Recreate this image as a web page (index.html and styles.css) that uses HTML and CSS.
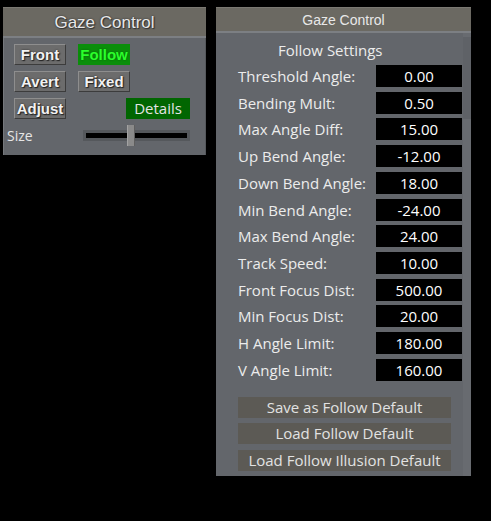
FILE: index.html
```html
<!DOCTYPE html>
<html>
<head>
<meta charset="utf-8">
<link rel="stylesheet" href="styles.css">
</head>
<body>
<div class="desk">
  <div class="panel small">
    <div class="title big">Gaze Control</div>
    <div class="body">
      <div class="brow">
        <span class="btn">Front</span>
        <span class="btn on">Follow</span>
      </div>
      <div class="brow">
        <span class="btn">Avert</span>
        <span class="btn">Fixed</span>
      </div>
      <div class="brow last">
        <span class="btn">Adjust</span>
        <span class="details">Details</span>
      </div>
      <div class="sizerow">
        <span class="sizelabel">Size</span>
        <div class="slider"><div class="track"></div><div class="thumb"></div></div>
      </div>
    </div>
  </div>
  <div class="panel wide">
    <div class="title">Gaze Control</div>
    <div class="body2">
      <div class="scroll"><div class="sthumb"></div></div>
      <div class="heading">Follow Settings</div>
      <div class="rows">
        <div class="row"><span class="lbl">Threshold Angle:</span><span class="val">0.00</span></div>
        <div class="row"><span class="lbl">Bending Mult:</span><span class="val">0.50</span></div>
        <div class="row"><span class="lbl">Max Angle Diff:</span><span class="val">15.00</span></div>
        <div class="row"><span class="lbl">Up Bend Angle:</span><span class="val">-12.00</span></div>
        <div class="row"><span class="lbl">Down Bend Angle:</span><span class="val">18.00</span></div>
        <div class="row"><span class="lbl">Min Bend Angle:</span><span class="val">-24.00</span></div>
        <div class="row"><span class="lbl">Max Bend Angle:</span><span class="val">24.00</span></div>
        <div class="row"><span class="lbl">Track Speed:</span><span class="val">10.00</span></div>
        <div class="row"><span class="lbl">Front Focus Dist:</span><span class="val">500.00</span></div>
        <div class="row"><span class="lbl">Min Focus Dist:</span><span class="val">20.00</span></div>
        <div class="row"><span class="lbl">H Angle Limit:</span><span class="val">180.00</span></div>
        <div class="row"><span class="lbl">V Angle Limit:</span><span class="val">160.00</span></div>
      </div>
      <div class="actions">
        <span class="act">Save as Follow Default</span>
        <span class="act">Load Follow Default</span>
        <span class="act">Load Follow Illusion Default</span>
      </div>
    </div>
  </div>
</div>
</body>
</html>
```

FILE: styles.css
```css
html, body {
  margin: 0;
  padding: 0;
  background: #000;
  width: 491px;
  height: 521px;
  overflow: hidden;
}
.desk {
  display: flex;
  align-items: flex-start;
  gap: 10px;
  padding: 7px 0 0 3px;
}
.panel {
  background: #63666b;
  display: flex;
  flex-direction: column;
}
.small {
  width: 203px;
  height: 148px;
  box-shadow: inset 1px 0 0 #75787c, inset -1px 0 0 #55585c;
}
.wide {
  width: 255px;
  height: 469px;
}
.title {
  background: #6b6962;
  color: #e8e8e8;
  font-family: "Liberation Sans", Arial, sans-serif;
  text-align: center;
  border-top: 1px solid #7a7872;
  border-bottom: 2px solid #7c7f83;
  box-sizing: border-box;
  height: 26px;
  line-height: 24px;
  font-size: 14px;
}
.title.big {
  height: 31px;
  line-height: 30px;
  font-size: 17px;
  text-shadow: 0 0 2px #2c2c2c, 1px 1px 1px #333;
}
.body {
  display: flex;
  flex-direction: column;
  padding: 6px 16px 0 11px;
}
.brow {
  display: flex;
  gap: 12px;
  margin-bottom: 6px;
}
.brow.last {
  justify-content: space-between;
  margin-bottom: 0;
}
.btn {
  width: 52px;
  height: 21px;
  box-sizing: border-box;
  background: #6c6c6c;
  border: 1px solid;
  border-color: #8e8e8e #3c3c3c #3c3c3c #8e8e8e;
  color: #f2f2f2;
  font-family: "Liberation Sans", Arial, sans-serif;
  font-weight: bold;
  font-size: 15px;
  line-height: 19px;
  text-align: center;
  text-shadow: 0 0 2px #222, 1px 1px 1px #222;
}
.btn.on {
  background: #0b8e0b;
  border-color: #0b8e0b;
  color: #2bff2b;
  text-shadow: 0 0 2px #0a5a0a;
}
.details {
  width: 64px;
  height: 21px;
  background: #016601;
  color: #e4e4e4;
  font-family: "Open Sans", "Noto Sans", sans-serif;
  font-size: 15px;
  line-height: 21px;
  text-align: center;
}
.sizerow {
  display: flex;
  align-items: center;
  margin-left: -7px;
  margin-top: 6px;
  height: 21px;
}
.sizelabel {
  width: 76px;
  color: #e6e6e6;
  font-family: "Open Sans", "Noto Sans", sans-serif;
  font-size: 14px;
}
.slider {
  position: relative;
  width: 107px;
  height: 11px;
  background: #55585c;
  box-sizing: border-box;
  padding: 3px;
}
.track {
  height: 5px;
  background: #000;
}
.thumb {
  position: absolute;
  left: 44px;
  top: -5px;
  width: 8px;
  height: 21px;
  background: #8a8a8a;
  border-left: 1px solid #a2a2a2;
  border-right: 1px solid #5e5e5e;
  box-sizing: border-box;
}
.body2 {
  position: relative;
  flex: 1;
  display: flex;
  flex-direction: column;
  padding: 7px 0 0 22px;
}
.scroll {
  position: absolute;
  right: 0;
  top: 0;
  width: 8px;
  height: 100%;
  background: #686b70;
}
.sthumb {
  margin-top: 4px;
  height: 82px;
  background: #5f6267;
}
.heading {
  margin-left: 40px;
  color: #ececec;
  font-family: "Open Sans", "Noto Sans", sans-serif;
  font-size: 15px;
  line-height: 20px;
  height: 25px;
}
.rows {
  display: flex;
  flex-direction: column;
  gap: 4.73px;
}
.row {
  display: flex;
  align-items: center;
  height: 22px;
}
.lbl {
  width: 138px;
  color: #ececec;
  font-family: "Open Sans", "Noto Sans", sans-serif;
  font-size: 15px;
}
.val {
  width: 86px;
  height: 22px;
  background: #000;
  color: #fff;
  font-family: "Open Sans", "Noto Sans", sans-serif;
  font-size: 15px;
  line-height: 22px;
  text-align: center;
}
.actions {
  display: flex;
  flex-direction: column;
  gap: 5.5px;
  margin-top: 16px;
  width: 213px;
}
.act {
  height: 21px;
  background: #5c5a55;
  color: #e2e2e2;
  font-family: "Open Sans", "Noto Sans", sans-serif;
  font-size: 15px;
  line-height: 21px;
  text-align: center;
}
```
